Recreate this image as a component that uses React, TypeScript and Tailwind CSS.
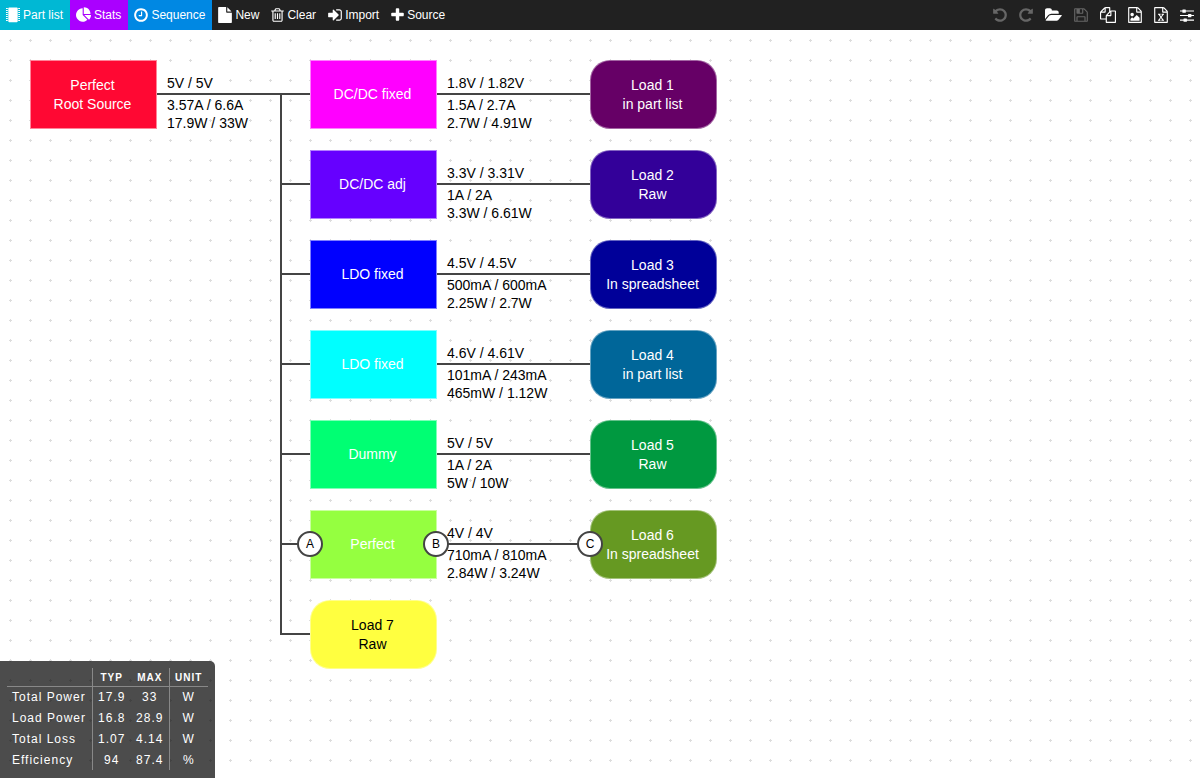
import type { ReactNode } from 'react';

type IconProps = { box: string; size: string; children: ReactNode };

function Icon({ box, size, children }: IconProps) {
  return (
    <svg viewBox={box} className={`${size} h-4 shrink-0`} fill="currentColor" aria-hidden="true">
      {children}
    </svg>
  );
}

const CHIP_PINS = [1, 3, 5, 7, 9, 11, 13];
const FILE_FRAME =
  'M1596 380q28 28 48 76t20 88v1152q0 40-28 68t-68 28h-1344q-40 0-68-28t-28-68v-1600q0-40 28-68t68-28h896q40 0 88 20t76 48zm-444-244v376h376q-10-29-22-41l-313-313q-12-12-41-22zm384 1528v-1024h-416q-40 0-68-28t-28-68v-416h-768v1536h1280z';
const UNDO =
  'M1664 896q0 156-61 298t-164 245-245 164-298 61q-172 0-327-72.5t-264-204.5q-7-10-6.5-22.5t8.5-20.5l137-138q10-9 25-9 16 2 23 12 73 95 179 147t225 52q104 0 198.5-40.5t163.5-109.5 109.5-163.5 40.5-198.5-40.5-198.5-109.5-163.5-163.5-109.5-198.5-40.5q-98 0-188 35.5t-160 101.5l137 138q31 30 14 69-17 40-59 40h-448q-26 0-45-19t-19-45v-448q0-42 40-59 39-17 69 14l130 129q107-101 244.5-156.5t284.5-55.5q156 0 298 61t245 164 164 245 61 298z';

const ChipIcon = () => (
  <Icon box="0 0 14 16" size="w-3.5">
    <rect x="2.3" y="0.4" width="9.4" height="14.8" rx="1" />
    {CHIP_PINS.map((y) => (
      <path key={y} d={`M0 ${y}h1.8v1H0zM12.2 ${y}H14v1h-1.8z`} />
    ))}
  </Icon>
);
const PieIcon = () => (
  <Icon box="0 0 1728 1792" size="w-[15px]">
    <path d="M768 890l546 546q-106 108-247.5 168t-298.5 60q-209 0-385.5-103t-279.5-279.5-103-385.5 103-385.5 279.5-279.5 385.5-103v762zm187 6h773q0 157-60 298.5t-168 247.5zm709-128h-768v-768q209 0 385.5 103t279.5 279.5 103 385.5z" />
  </Icon>
);
const ClockIcon = () => (
  <Icon box="128 0 1536 1792" size="w-3.5">
    <path d="M1024 544v448q0 14-9 23t-23 9h-320q-14 0-23-9t-9-23v-64q0-14 9-23t23-9h224v-352q0-14 9-23t23-9h64q14 0 23 9t9 23zm416 352q0-148-73-273t-198-198-273-73-273 73-198 198-73 273 73 273 198 198 273 73 273-73 198-198 73-273zm224 0q0 209-103 385.5t-279.5 279.5-385.5 103-385.5-103-279.5-279.5-103-385.5 103-385.5 279.5-279.5 385.5-103 385.5 103 279.5 279.5 103 385.5z" />
  </Icon>
);
const FileIcon = () => (
  <Icon box="128 0 1536 1792" size="w-3.5">
    <path d="M1152 512v-472q22 14 36 28l408 408q14 14 28 36h-472zm-128 32q0 40 28 68t68 28h544v1056q0 40-28 68t-68 28h-1344q-40 0-68-28t-28-68v-1600q0-40 28-68t68-28h800v544z" />
  </Icon>
);
const TrashIcon = () => (
  <Icon box="168 0 1456 1792" size="w-[13px]">
    <path d="M704 736v576q0 14-9 23t-23 9h-64q-14 0-23-9t-9-23v-576q0-14 9-23t23-9h64q14 0 23 9t9 23zm256 0v576q0 14-9 23t-23 9h-64q-14 0-23-9t-9-23v-576q0-14 9-23t23-9h64q14 0 23 9t9 23zm256 0v576q0 14-9 23t-23 9h-64q-14 0-23-9t-9-23v-576q0-14 9-23t23-9h64q14 0 23 9t9 23zm128 724v-948h-896v948q0 22 7 40.5t14.5 27 10.5 8.5h832q3 0 10.5-8.5t14.5-27 7-40.5zm-672-1076h448l-48-117q-7-9-17-11h-317q-10 2-17 11zm928 32v64q0 14-9 23t-23 9h-96v948q0 83-47 143.5t-113 60.5h-832q-66 0-113-58.5t-47-141.5v-952h-96q-14 0-23-9t-9-23v-64q0-14 9-23t23-9h309l70-167q15-37 54-63t79-26h320q40 0 79 26t54 63l70 167h309q14 0 23 9t9 23z" />
  </Icon>
);
const ImportIcon = () => (
  <Icon box="128 0 1536 1792" size="w-3.5">
    <path d="M1312 896q0 26-19 45l-544 544q-19 19-45 19t-45-19-19-45v-288h-448q-26 0-45-19t-19-45v-384q0-26 19-45t45-19h448v-288q0-26 19-45t45-19 45 19l544 544q19 19 19 45zm352-352v704q0 119-84.5 203.5t-203.5 84.5h-320q-13 0-22.5-9.5t-9.5-22.5q0-4-1-20t-.5-26.5 3-23.5 10-19.5 20.5-6.5h320q66 0 113-47t47-113v-704q0-66-47-113t-113-47h-312l-11.5-1-11.5-3-8-5.5-7-9-2-13.5q0-4-1-20t-.5-26.5 3-23.5 10-19.5 20.5-6.5h320q119 0 203.5 84.5t84.5 203.5z" />
  </Icon>
);
const PlusIcon = () => (
  <Icon box="168 0 1456 1792" size="w-[13px]">
    <path d="M1600 736v192q0 40-28 68t-68 28h-416v416q0 40-28 68t-68 28h-192q-40 0-68-28t-28-68v-416h-416q-40 0-68-28t-28-68v-192q0-40 28-68t68-28h416v-416q0-40 28-68t68-28h192q40 0 68 28t28 68v416h416q40 0 68 28t28 68z" />
  </Icon>
);
const UndoIcon = () => (
  <Icon box="128 0 1536 1792" size="w-3.5">
    <path d={UNDO} />
  </Icon>
);
const RedoIcon = () => (
  <Icon box="128 0 1536 1792" size="w-3.5">
    <path d={UNDO} transform="translate(1792 0) scale(-1 1)" />
  </Icon>
);
const OpenIcon = () => (
  <Icon box="0 0 1904 1792" size="w-[17px]">
    <path d="M1879 952q0 31-31 66l-336 396q-43 51-120.5 86.5t-143.5 35.5h-1088q-34 0-60.5-13t-26.5-43q0-31 31-66l336-396q43-51 120.5-86.5t143.5-35.5h1088q34 0 60.5 13t26.5 43zm-343-344v160h-832q-94 0-197 47.5t-164 119.5l-337 396-5 6q0-4-.5-12.5t-.5-12.5v-960q0-92 66-158t158-66h320q92 0 158 66t66 158v32h544q92 0 158 66t66 158z" />
  </Icon>
);
const SaveIcon = () => (
  <Icon box="128 0 1536 1792" size="w-3.5">
    <path d="M512 1536h768v-384h-768v384zm896 0h128v-896q0-14-10-38.5t-20-34.5l-281-281q-10-10-34-20t-39-10v416q0 40-28 68t-68 28h-576q-40 0-68-28t-28-68v-416h-128v1280h128v-416q0-40 28-68t68-28h832q40 0 68 28t28 68v416zm-384-928v-320q0-13-9.5-22.5t-22.5-9.5h-192q-13 0-22.5 9.5t-9.5 22.5v320q0 13 9.5 22.5t22.5 9.5h192q13 0 22.5-9.5t9.5-22.5zm640 32v928q0 40-28 68t-68 28h-1344q-40 0-68-28t-28-68v-1344q0-40 28-68t68-28h928q40 0 88 20t76 48l280 280q28 28 48 76t20 88z" />
  </Icon>
);
const CopyIcon = () => (
  <Icon box="0 0 1792 1792" size="w-4">
    <path d="M1696 384q40 0 68 28t28 68v1216q0 40-28 68t-68 28h-960q-40 0-68-28t-28-68v-288h-544q-40 0-68-28t-28-68v-672q0-40 20-88t48-76l408-408q28-28 76-48t88-20h416q40 0 68 28t28 68v328q68-40 128-40h416zm-544 213l-299 299h299v-299zm-640-384l-299 299h299v-299zm196 647l316-316v-416h-384v416q0 40-28 68t-68 28h-416v640h512v-256q0-40 20-88t48-76zm956 804v-1152h-384v416q0 40-28 68t-68 28h-416v640h896z" />
  </Icon>
);
const ImageFileIcon = () => (
  <Icon box="128 0 1536 1792" size="w-3.5">
    <path d={FILE_FRAME} />
    <path d="M1408 1216v320h-1024v-192l192-192 128 128 384-384zm-832-192q-80 0-136-56t-56-136 56-136 136-56 136 56 56 136-56 136-136 56z" />
  </Icon>
);
const ExcelFileIcon = () => (
  <Icon box="128 0 1536 1792" size="w-3.5">
    <path d={FILE_FRAME} />
    <path d="M557 1430v106h281v-106h-75l103-161q5-7 10-16.5t7.5-13.5 3.5-4h2q1 4 5 10 2 4 4.5 7.5t6 8 6.5 8.5l107 161h-76v106h291v-106h-68l-192-273 195-282h67v-107h-279v107h74l-103 159q-4 7-10 16.5t-9 13.5l-2 3h-2q-1-4-5-10-6-11-17-23l-106-159h76v-107h-290v107h68l189 272-194 283h-68z" />
  </Icon>
);
const SlidersIcon = () => (
  <Icon box="0 0 14 16" size="w-3.5">
    <path d="M0 3.5h14v1.1H0zM0 8h14v1.1H0zM0 12.6h14v1.1H0z" />
    <rect x="2.4" y="2.4" width="3.4" height="3.3" rx="0.5" />
    <rect x="8" y="6.9" width="3.4" height="3.3" rx="0.5" />
    <rect x="3.5" y="11.5" width="3.4" height="3.3" rx="0.5" />
  </Icon>
);

type Action = { label: string; icon: () => ReactNode; tone: string };

const ACTIONS: Action[] = [
  { label: 'Part list', icon: ChipIcon, tone: 'pr-[7px] bg-[#00b8d4]' },
  { label: 'Stats', icon: PieIcon, tone: 'pr-[7px] bg-[#aa00ff]' },
  { label: 'Sequence', icon: ClockIcon, tone: 'pr-[7px] bg-[#0088e3]' },
  { label: 'New', icon: FileIcon, tone: 'pr-1.5' },
  { label: 'Clear', icon: TrashIcon, tone: 'pr-1.5' },
  { label: 'Import', icon: ImportIcon, tone: 'pr-1.5' },
  { label: 'Source', icon: PlusIcon, tone: 'pr-1.5' },
];

const TOOLS = [
  { label: 'Undo', icon: UndoIcon, disabled: true },
  { label: 'Redo', icon: RedoIcon, disabled: true },
  { label: 'Open', icon: OpenIcon, disabled: false },
  { label: 'Save', icon: SaveIcon, disabled: true },
  { label: 'Save as', icon: CopyIcon, disabled: false },
  { label: 'Export image', icon: ImageFileIcon, disabled: false },
  { label: 'Export spreadsheet', icon: ExcelFileIcon, disabled: false },
  { label: 'Settings', icon: SlidersIcon, disabled: false },
];

function Toolbar() {
  return (
    <header className="flex h-[30px] shrink-0 justify-between bg-[#212121] text-xs text-white">
      <div className="flex">
        {ACTIONS.map(({ label, icon: Glyph, tone }) => (
          <button key={label} type="button" className={`flex items-center gap-[3px] pl-1.5 ${tone}`}>
            <Glyph />
            <span>{label}</span>
          </button>
        ))}
      </div>
      <div className="flex">
        {TOOLS.map(({ label, icon: Glyph, disabled }) => (
          <button
            key={label}
            type="button"
            aria-label={label}
            disabled={disabled}
            className="flex items-center px-1.5 disabled:text-[#666666]"
          >
            <Glyph />
          </button>
        ))}
      </div>
    </header>
  );
}

type NodeData = { column: number; row: number; lines: string[]; tone: string; load?: boolean; out?: string[] };

const COLUMNS = [30, 310, 590];
const rowTop = (row: number) => 30 + row * 90;

const NODES: NodeData[] = [
  { column: 0, row: 0, lines: ['Perfect', 'Root Source'], tone: 'bg-[#ff0833] text-white', out: ['5V / 5V', '3.57A / 6.6A', '17.9W / 33W'] },
  { column: 1, row: 0, lines: ['DC/DC fixed'], tone: 'bg-[#ff00ff] text-white', out: ['1.8V / 1.82V', '1.5A / 2.7A', '2.7W / 4.91W'] },
  { column: 1, row: 1, lines: ['DC/DC adj'], tone: 'bg-[#6600ff] text-white', out: ['3.3V / 3.31V', '1A / 2A', '3.3W / 6.61W'] },
  { column: 1, row: 2, lines: ['LDO fixed'], tone: 'bg-[#0000ff] text-white', out: ['4.5V / 4.5V', '500mA / 600mA', '2.25W / 2.7W'] },
  { column: 1, row: 3, lines: ['LDO fixed'], tone: 'bg-[#00ffff] text-white', out: ['4.6V / 4.61V', '101mA / 243mA', '465mW / 1.12W'] },
  { column: 1, row: 4, lines: ['Dummy'], tone: 'bg-[#00ff73] text-white', out: ['5V / 5V', '1A / 2A', '5W / 10W'] },
  { column: 1, row: 5, lines: ['Perfect'], tone: 'bg-[#95ff40] text-white', out: ['4V / 4V', '710mA / 810mA', '2.84W / 3.24W'] },
  { column: 1, row: 6, lines: ['Load 7', 'Raw'], tone: 'bg-[#ffff40] text-black', load: true },
  { column: 2, row: 0, lines: ['Load 1', 'in part list'], tone: 'bg-[#660066] text-white', load: true },
  { column: 2, row: 1, lines: ['Load 2', 'Raw'], tone: 'bg-[#330099] text-white', load: true },
  { column: 2, row: 2, lines: ['Load 3', 'In spreadsheet'], tone: 'bg-[#000099] text-white', load: true },
  { column: 2, row: 3, lines: ['Load 4', 'in part list'], tone: 'bg-[#006699] text-white', load: true },
  { column: 2, row: 4, lines: ['Load 5', 'Raw'], tone: 'bg-[#009940] text-white', load: true },
  { column: 2, row: 5, lines: ['Load 6', 'In spreadsheet'], tone: 'bg-[#669922] text-white', load: true },
];

const BADGES = [
  { label: 'A', x: 310 },
  { label: 'B', x: 436 },
  { label: 'C', x: 590 },
];

function Wires() {
  return (
    <svg className="absolute inset-0 size-full" aria-hidden="true">
      <defs>
        <pattern id="grid" width="20" height="20" patternUnits="userSpaceOnUse">
          <path d="M9 10h3v1H9zM10 9h1v3h-1z" fill="#dddddd" />
        </pattern>
      </defs>
      <rect width="100%" height="100%" fill="url(#grid)" />
      <g stroke="#444444" strokeWidth="2" fill="none">
        <path d="M157 64H310M281 64V604H310" />
        {[1, 2, 3, 4, 5].map((row) => (
          <path key={row} d={`M281 ${64 + row * 90}H310`} />
        ))}
        {[0, 1, 2, 3, 4, 5].map((row) => (
          <path key={row} d={`M437 ${64 + row * 90}H590`} />
        ))}
      </g>
    </svg>
  );
}

function Diagram() {
  return (
    <>
      <Wires />
      {NODES.map(({ column, row, lines, tone, load }) => (
        <div
          key={`${column}-${row}`}
          className={`absolute flex h-[69px] w-[127px] flex-col items-center justify-center border pr-0.5 text-sm leading-[19px] ${load ? 'rounded-[20px] border-white/40' : 'border-white/50'} ${tone}`}
          style={{ left: COLUMNS[column], top: rowTop(row) }}
        >
          {lines.map((line) => (
            <span key={line}>{line}</span>
          ))}
        </div>
      ))}
      {BADGES.map(({ label, x }) => (
        <div
          key={label}
          className="absolute flex size-[26px] items-center justify-center rounded-full border-2 border-[#444444] bg-white text-xs text-black"
          style={{ left: x - 13, top: rowTop(5) + 21 }}
        >
          {label}
        </div>
      ))}
      {NODES.map(
        ({ column, row, out }) =>
          out && (
            <div
              key={`${column}-${row}`}
              className="absolute flex flex-col text-sm leading-[18px] whitespace-nowrap text-black"
              style={{ left: COLUMNS[column] + 137, top: rowTop(row) + 14 }}
            >
              <span className="mb-1">{out[0]}</span>
              <span>{out[1]}</span>
              <span>{out[2]}</span>
            </div>
          ),
      )}
    </>
  );
}

const STATS = [
  ['Total Power', '17.9', '33', 'W'],
  ['Load Power', '16.8', '28.9', 'W'],
  ['Total Loss', '1.07', '4.14', 'W'],
  ['Efficiency', '94', '87.4', '%'],
];

function StatsPanel() {
  return (
    <section aria-label="Stats" className="absolute bottom-0 left-0 rounded-tr-[5px] bg-black/70 p-[7px] pb-2 text-white">
      <table className="border-collapse text-center text-xs tracking-[1px]">
        <thead>
          <tr className="h-[18px] border-b border-[#888888] text-[10px] uppercase">
            <td className="w-[85px] border-r border-[#888888]" />
            <th scope="col" className="w-[39px] p-0 pt-0.5 font-bold">Typ</th>
            <th scope="col" className="w-[38px] border-r border-[#888888] p-0 pt-0.5 font-bold">Max</th>
            <th scope="col" className="w-[39px] p-0 pt-0.5 font-bold">Unit</th>
          </tr>
        </thead>
        <tbody>
          {STATS.map(([name, typ, max, unit]) => (
            <tr key={name} className="h-[21px]">
              <th scope="row" className="border-r border-[#888888] p-0 pl-[5px] text-left font-normal whitespace-nowrap">{name}</th>
              <td className="p-0">{typ}</td>
              <td className="border-r border-[#888888] p-0">{max}</td>
              <td className="p-0">{unit}</td>
            </tr>
          ))}
        </tbody>
      </table>
    </section>
  );
}

export default function App() {
  return (
    <div className="flex min-h-screen flex-col bg-white font-['Liberation_Sans',Arial,sans-serif]">
      <Toolbar />
      <main className="relative min-h-[680px] flex-1 overflow-hidden">
        <Diagram />
        <StatsPanel />
      </main>
    </div>
  );
}
